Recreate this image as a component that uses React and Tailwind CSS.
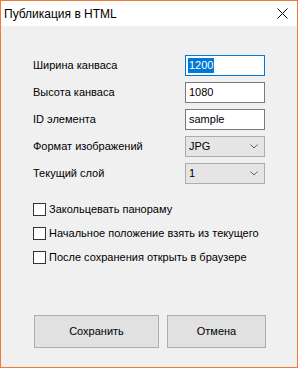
import React from "react";

const font = { fontFamily: '"Liberation Sans", Arial, sans-serif' };

function Chevron() {
  return (
    <svg width="8" height="5" viewBox="0 0 8 5" className="block">
      <path d="M0.5 0.5 L4 4 L7.5 0.5" fill="none" stroke="#606060" strokeWidth="1" />
    </svg>
  );
}

function Row({ label, children }) {
  return (
    <div className="flex items-center h-[21px]">
      <div className="w-[152px] text-[11px] text-black">{label}</div>
      {children}
    </div>
  );
}

function Input({ value, focused }) {
  return (
    <div
      className={
        "w-[80px] h-[21px] bg-white flex items-center pl-[2px] text-[11px] text-black border " +
        (focused ? "border-[#0078d7]" : "border-[#7a7a7a]")
      }
    >
      {focused ? (
        <span className="bg-[#0078d7] text-white px-[1px] leading-[15px]">{value}</span>
      ) : (
        <span className="pl-[1px]">{value}</span>
      )}
    </div>
  );
}

function Select({ value }) {
  return (
    <div className="w-[80px] h-[21px] bg-[#e5e5e5] border border-[#acacac] flex items-center justify-between pl-[3px] pr-[6px] text-[11px] text-black">
      <span>{value}</span>
      <Chevron />
    </div>
  );
}

function Check({ label }) {
  return (
    <div className="flex items-center h-[13px]">
      <div className="w-[13px] h-[13px] border border-[#333333] bg-white shrink-0" />
      <span className="ml-[3px] text-[11px] text-black whitespace-nowrap">{label}</span>
    </div>
  );
}

export default function App() {
  return (
    <div
      className="w-[298px] h-[368px] border border-[#f3783a] flex flex-col bg-[#f0f0f0]"
      style={font}
    >
      <div className="h-[25px] bg-white flex items-center justify-between pl-[3px] pr-[9px] shrink-0">
        <span className="text-[12px] text-black">Публикация в HTML</span>
        <svg width="11" height="11" viewBox="0 0 11 11" className="block">
          <path d="M0.5 0.5 L10.5 10.5 M10.5 0.5 L0.5 10.5" stroke="#000" strokeWidth="1" />
        </svg>
      </div>
      <div className="flex-1 flex flex-col pl-[32px] pt-[29px]">
        <div className="flex flex-col gap-[6px]">
          <Row label="Ширина канваса">
            <Input value="1200" focused />
          </Row>
          <Row label="Высота канваса">
            <Input value="1080" />
          </Row>
          <Row label="ID элемента">
            <Input value="sample" />
          </Row>
          <Row label="Формат изображений">
            <Select value="JPG" />
          </Row>
          <Row label="Текущий слой">
            <Select value="1" />
          </Row>
        </div>
        <div className="flex flex-col gap-[11px] mt-[19px]">
          <Check label="Закольцевать панораму" />
          <Check label="Начальное положение взять из текущего" />
          <Check label="После сохранения открыть в браузере" />
        </div>
        <div className="flex gap-[8px] mt-[51px] pl-[1px]">
          <div className="w-[125px] h-[33px] bg-[#e1e1e1] border border-[#adadad] flex items-center justify-center text-[11px] text-black">
            Сохранить
          </div>
          <div className="w-[99px] h-[33px] bg-[#e1e1e1] border border-[#adadad] flex items-center justify-center text-[11px] text-black">
            Отмена
          </div>
        </div>
      </div>
    </div>
  );
}
